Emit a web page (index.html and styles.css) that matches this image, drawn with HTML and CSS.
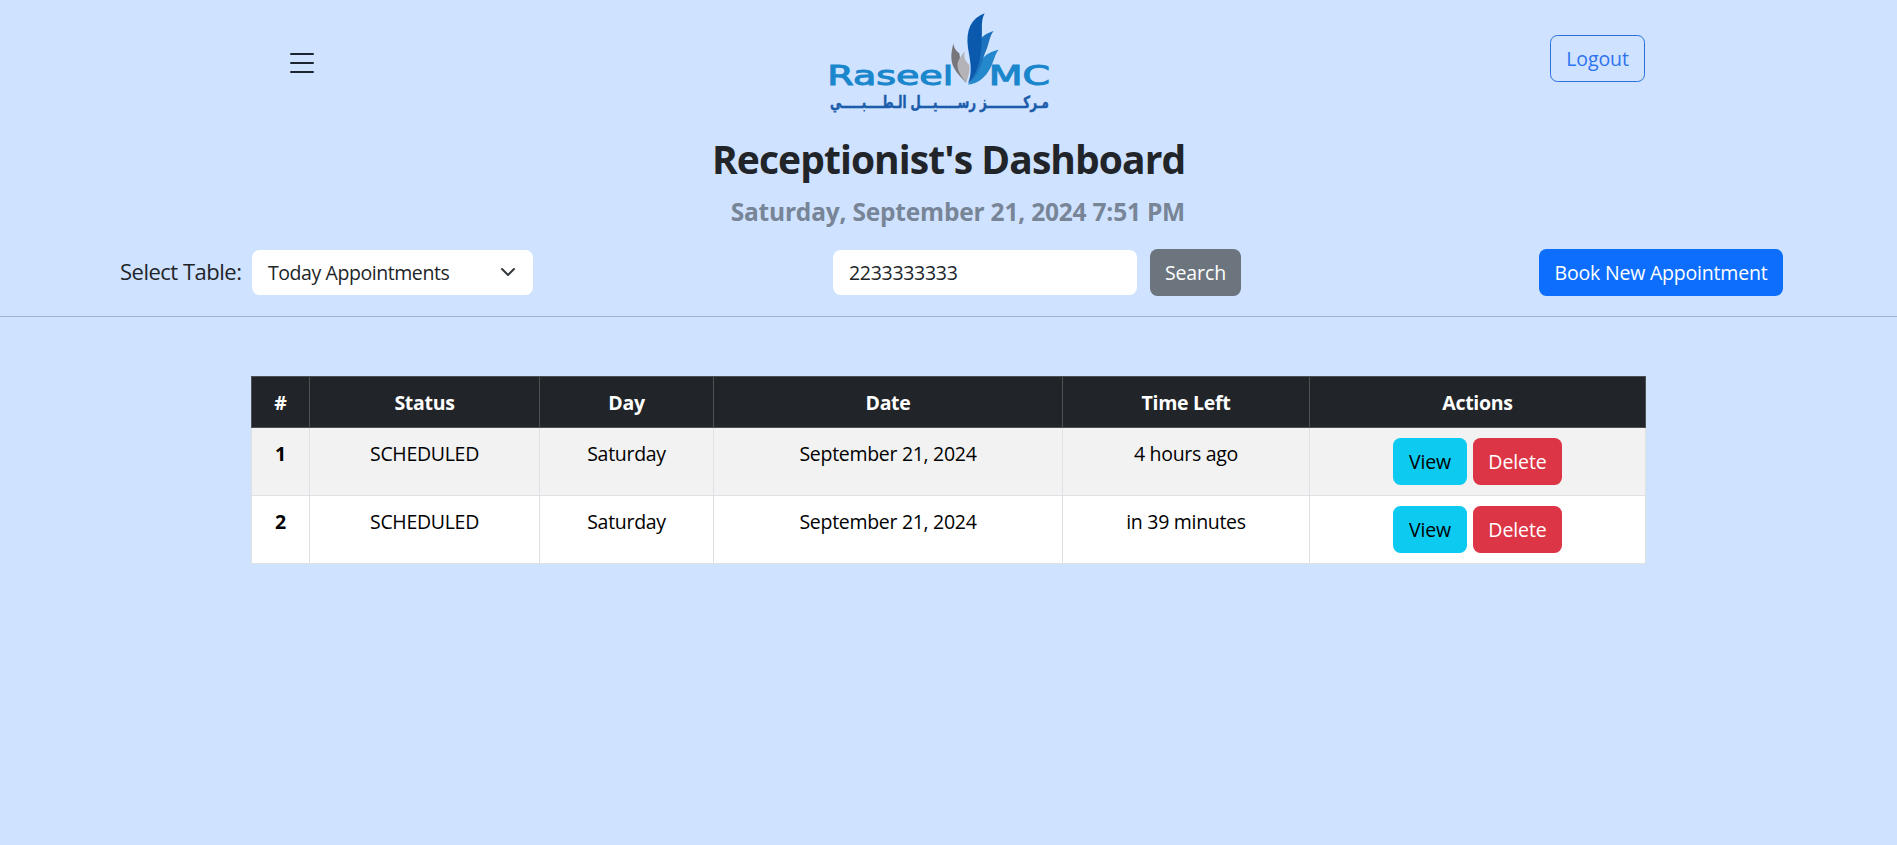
FILE: index.html
```html
<!DOCTYPE html>
<html lang="en">
<head>
<meta charset="utf-8">
<title>Receptionist's Dashboard</title>
<link rel="stylesheet" href="styles.css">
</head>
<body>
<header class="page-header">
  <div class="topbar">
    <button class="menu-toggle" aria-label="Menu"><span></span><span></span><span></span></button>
    <svg class="logo" viewBox="0 0 780 375" role="img" aria-label="Raseel MC">
      <text class="logo-latin" x="52" y="254" textLength="378" lengthAdjust="spacingAndGlyphs">Raseel</text>
      <text class="logo-latin" x="536" y="254" textLength="184" lengthAdjust="spacingAndGlyphs">MC</text>
      <path fill="#77777b" d="M430 130C432 145 437 151 448 160C451 184 456 202 467 248C449 228 429 208 425 184C422 164 426 148 430 130Z"/>
      <path fill="#b4b4b8" d="M464 153C460 178 469 184 477 194C482 211 474 229 469 249C453 229 440 210 443 190C446 175 456 166 464 153Z"/>
      <path fill="#2388cc" d="M566 149C554 164 551 185 541 204C527 232 504 251 474 254C502 228 503 196 521 172C535 157 550 153 566 149Z"/>
      <path fill="#1d72bd" d="M551 93C538 108 537 134 526 157C516 182 510 224 475 252C496 218 493 164 502 135C512 107 533 99 551 93Z"/>
      <path fill="#0b59ad" d="M524 40C511 63 518 91 515 122C513 160 511 211 474 250C489 216 480 180 474 144C467 91 483 55 524 40Z"/>
      <text class="logo-arabic" direction="rtl" x="716" y="325" textLength="656" lengthAdjust="spacingAndGlyphs">مـركـــــــــز رســـــيـــل الـطــــبـــــي</text>
    </svg>
    <button class="btn btn-outline">Logout</button>
  </div>
  <div class="heading">
    <h1>Receptionist's Dashboard</h1>
    <h2>Saturday, September 21, 2024 7:51 PM</h2>
  </div>
  <div class="toolbar">
    <div class="picker">
      <span class="picker-label">Select Table:</span>
      <div class="field select"><span>Today Appointments</span>
        <svg class="chevron" viewBox="0 0 16 16"><path d="m2 5 6 6 6-6"/></svg>
      </div>
    </div>
    <div class="search">
      <div class="field phone">2233333333</div>
      <button class="btn btn-secondary">Search</button>
    </div>
    <button class="btn btn-primary">Book New Appointment</button>
  </div>
</header>
<main>
  <table>
    <colgroup><col class="c-num"><col class="c-status"><col class="c-day"><col class="c-date"><col class="c-time"><col class="c-actions"></colgroup>
    <thead><tr><th>#</th><th>Status</th><th>Day</th><th>Date</th><th>Time Left</th><th>Actions</th></tr></thead>
    <tbody>
      <tr><th>1</th><td>SCHEDULED</td><td>Saturday</td><td>September 21, 2024</td><td>4 hours ago</td><td><div class="actions"><button class="btn btn-info">View</button><button class="btn btn-danger">Delete</button></div></td></tr>
      <tr><th>2</th><td>SCHEDULED</td><td>Saturday</td><td>September 21, 2024</td><td>in 39 minutes</td><td><div class="actions"><button class="btn btn-info">View</button><button class="btn btn-danger">Delete</button></div></td></tr>
    </tbody>
  </table>
</main>
</body>
</html>
```

FILE: styles.css
```css
* { box-sizing: border-box; }
body {
  margin: 0;
  min-height: 100vh;
  background: #cfe2ff;
  color: #212529;
  font: 400 19.5px/30px "Open Sans", "Noto Sans", sans-serif;
  letter-spacing: -0.3px;
}
.page-header { height: 317px; border-bottom: 1px solid #9fb3d6; }
.topbar {
  display: grid;
  grid-template-columns: 558px 260px 1fr;
  height: 125px;
  padding: 0 252px;
  align-items: start;
}
.menu-toggle {
  display: flex;
  flex-direction: column;
  gap: 7px;
  width: 24px;
  margin: 53px 0 0 38px;
  padding: 0;
  border: 0;
  background: none;
}
.menu-toggle span { height: 2px; border-radius: 1px; background: #1c2430; }
.logo { width: 260px; height: 125px; }
.logo-latin { font: 400 78px "DejaVu Sans", sans-serif; fill: #1a86cc; stroke: #1a86cc; stroke-width: 3; letter-spacing: 0; }
.logo-arabic { font: 700 50px "DejaVu Sans", sans-serif; fill: #1b5cab; stroke: #1b5cab; stroke-width: 1.5; letter-spacing: 0; }
.btn {
  height: 47px;
  padding: 1px 0 0;
  border: 1px solid transparent;
  border-radius: 7.5px;
  color: #fff;
  font: inherit;
  letter-spacing: -0.1px;
  white-space: nowrap;
}
.btn-outline { width: 95px; margin-top: 35px; justify-self: end; border-color: #2a70dc; background: none; color: #2d72f0; }
.btn-secondary { width: 91px; background: #6c757d; }
.btn-primary { width: 244px; background: #0d6efd; letter-spacing: -0.2px; }
.btn-info { width: 74px; background: #0dcaf0; color: #000; }
.btn-danger { width: 89px; background: #dc3545; }
.heading { width: 473px; height: 124px; margin: 0 auto; padding-top: 10px; text-align: right; white-space: nowrap; }
h1 { margin: 0 0 14px; font-size: 39px; line-height: 48px; letter-spacing: -0.93px; }
h2 { margin: 0; font-size: 24.5px; line-height: 30px; color: #778597; letter-spacing: -0.2px; }
.toolbar { display: flex; justify-content: space-between; align-items: center; height: 47px; padding: 0 114px 0 120px; }
.picker, .search { display: flex; align-items: center; }
.picker { width: 413px; justify-content: space-between; }
.picker-label { margin-top: -3px; font-size: 22px; letter-spacing: -0.5px; }
.field { display: flex; align-items: center; height: 45px; padding: 1px 16px 0; border-radius: 7.5px; background: #fff; }
.select { width: 281px; padding-right: 17px; justify-content: space-between; letter-spacing: -0.43px; }
.chevron { width: 16px; height: 16px; margin-top: -3px; fill: none; stroke: #343a40; stroke-width: 2; stroke-linecap: round; stroke-linejoin: round; }
.phone { width: 304px; }
.search { gap: 13px; margin-left: 2px; }
main { padding: 59px 251px 0; }
table { width: 1395px; border-collapse: collapse; table-layout: fixed; background: #fff; color: #000; text-align: center; }
th, td { padding: 10px; border: 1px solid #dee2e6; vertical-align: top; }
thead th { height: 51px; padding-top: 11px; padding-bottom: 9px; border-color: #4d5154; background: #212529; color: #fff; }
tbody tr { height: 68px; }
tbody th, tbody td:not(:last-child) { padding-top: 11px; }
tbody tr:first-child { background: #f2f2f2; }
.c-num { width: 58px; }
.c-status { width: 230px; }
.c-day { width: 174px; }
.c-date { width: 349px; }
.c-time { width: 247px; }
.actions { display: flex; justify-content: center; gap: 6px; }
```
